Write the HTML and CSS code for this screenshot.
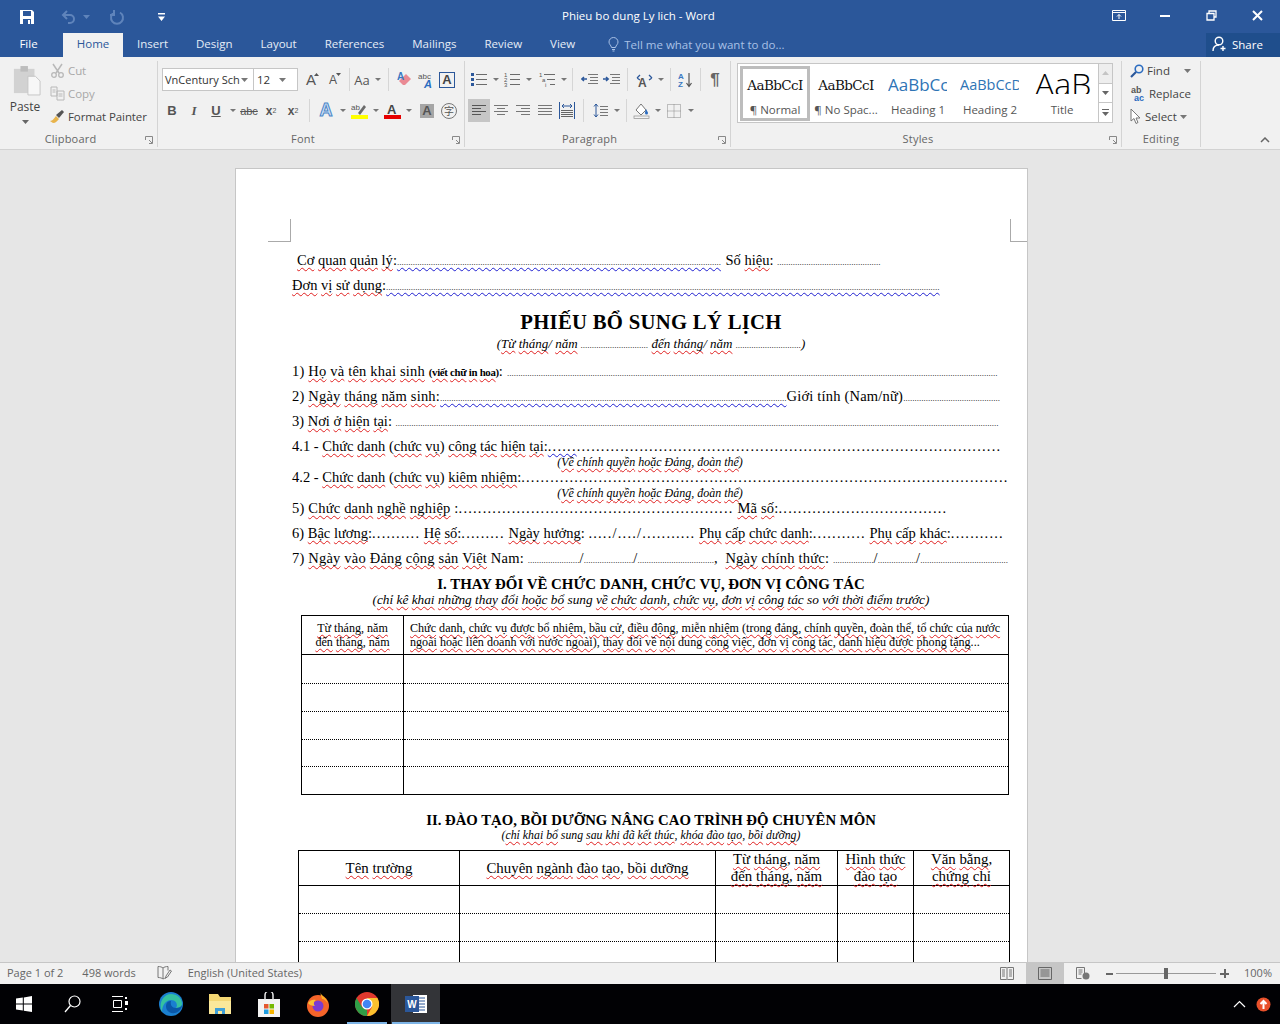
FILE: index.html
```html
<!DOCTYPE html>
<html lang="vi">
<head>
<meta charset="utf-8">
<title>Phieu bo dung Ly lich - Word</title>
<link rel="stylesheet" href="styles.css">
</head>
<body>
<div class="app">
  <header class="titlebar">
    <div class="qat">
      <svg class="q-save" width="16" height="16" viewBox="0 0 16 16"><path d="M1 1h12l2 2v12H1z" fill="#fff"/><rect x="4" y="2" width="8" height="5" fill="#2b579a"/><rect x="4" y="10" width="8" height="5" fill="#2b579a"/><rect x="9" y="11" width="2" height="4" fill="#fff"/></svg>
      <svg class="q-undo" width="16" height="16" viewBox="0 0 16 16"><path d="M6 2 2 6l4 4M2 6h7a4 4 0 0 1 0 8H7" fill="none" stroke="#5f84bb" stroke-width="2"/></svg>
      <svg class="q-arrow" width="7" height="4" viewBox="0 0 7 4"><path d="M0 0h7L3.500 4z" fill="#5f84bb"/></svg>
      <svg class="q-redo" width="16" height="16" viewBox="0 0 16 16"><path d="M11 3.500a6 6 0 1 1-6 0M5 1v5H1" fill="none" stroke="#5f84bb" stroke-width="2"/></svg>
      <svg class="q-cust" width="7" height="8" viewBox="0 0 7 8"><path d="M0 0h7v1.500H0zM0 3.500h7L3.500 8z" fill="#fff"/></svg>
    </div>
    <div class="doc-title">Phieu bo dung Ly lich - Word</div>
    <div class="winctl">
      <div class="wc"><svg width="14" height="11" viewBox="0 0 14 11"><path d="M.5.500h13v10H.500zM.5 2.500h13M7 9V4.500M5 6.500l2-2 2 2" fill="none" stroke="#fff"/></svg></div>
      <div class="wc"><svg width="10" height="2" viewBox="0 0 10 2"><rect width="10" height="2" fill="#fff"/></svg></div>
      <div class="wc"><svg width="11" height="11" viewBox="0 0 11 11"><path d="M3 3V1h7v6H8M1 3.500h7v6.500H1z" fill="none" stroke="#fff" stroke-width="1.300"/></svg></div>
      <div class="wc"><svg width="11" height="11" viewBox="0 0 11 11"><path d="m1 1 9 9M10 1l-9 9" stroke="#fff" stroke-width="2"/></svg></div>
    </div>
  </header>
  <nav class="tabs">
    <span class="tab tab-file">File</span>
    <span class="tab tab-active">Home</span>
    <span class="tab">Insert</span>
    <span class="tab">Design</span>
    <span class="tab">Layout</span>
    <span class="tab">References</span>
    <span class="tab">Mailings</span>
    <span class="tab">Review</span>
    <span class="tab">View</span>
    <span class="tell">
      <svg width="11" height="15" viewBox="0 0 11 15"><path d="M3.500 10.500C3 8 1 7.500 1 5a4.500 4.500 0 0 1 9 0c0 2.500-2 3-2.500 5.500zM4 12.500h3M4.500 14h2" fill="none" stroke="#a9c1e6"/></svg>
      Tell me what you want to do...
    </span>
    <span class="share">
      <svg width="16" height="16" viewBox="0 0 16 16"><circle cx="7" cy="5" r="3.800" fill="none" stroke="#fff" stroke-width="1.400"/><path d="M1 15c0-4 2.500-6 6-6M11 10v5M8.500 12.500h5" fill="none" stroke="#fff" stroke-width="1.400"/></svg>
      Share
    </span>
  </nav>

  <section class="ribbon">
    <div class="group g-clip">
      <div class="body clip-body">
        <div class="paste">
          <svg width="28" height="31" viewBox="0 0 30 33"><rect x="1" y="4" width="22" height="26" fill="#d2d2d2"/><rect x="8" y="1" width="8" height="6" fill="#bdbdbd"/><path d="M16 12h8l5 5v15H16z" fill="#f7f7f7" stroke="#c4c4c4"/></svg>
          <span class="paste-label">Paste</span>
          <svg class="mini" width="7" height="4" viewBox="0 0 7 4"><path d="M0 0h7L3.500 4z" fill="#666"/></svg>
        </div>
        <div class="clip-col">
          <div class="clip-item dim"><svg width="15" height="15" viewBox="0 0 15 15"><path d="M3 1l6 9M12 1 6 10" stroke="#b8b8b8" stroke-width="1.500" fill="none"/><circle cx="4" cy="12" r="2.300" fill="none" stroke="#b8b8b8" stroke-width="1.300"/><circle cx="11" cy="12" r="2.300" fill="none" stroke="#b8b8b8" stroke-width="1.300"/></svg>Cut</div>
          <div class="clip-item dim"><svg width="15" height="15" viewBox="0 0 15 15"><path d="M1 1h6v9H1zM7 5h7v9H7zM2.500 4h3M2.500 6h3M8.500 8h4M8.500 10h4" fill="none" stroke="#b8b8b8"/></svg>Copy</div>
          <div class="clip-item"><svg width="15" height="15" viewBox="0 0 15 15"><path d="M0 12c3 0 4-3 6-5l3 3c-2 2-3 4-6 4z" fill="#e8b44c"/><path d="m6 6 3 3 5-6-2-2z" fill="#555"/></svg>Format Painter</div>
        </div>
      </div>
      <div class="glabel">Clipboard<svg class="launch" width="8" height="8" viewBox="0 0 8 8"><path d="M.5 4V.500H7.500V7.500H4M4 4l3 3" fill="none" stroke="#888"/></svg></div>
    </div>

    <div class="group g-font">
      <div class="body">
        <div class="row">
          <div class="combo">
            <span class="fontname">VnCentury Sch</span><svg class="mini" width="7" height="4" viewBox="0 0 7 4"><path d="M0 0h7L3.500 4z" fill="#777"/></svg>
            <span class="fontsize">12</span><svg class="mini" width="7" height="4" viewBox="0 0 7 4"><path d="M0 0h7L3.500 4z" fill="#777"/></svg>
          </div>
          <div class="tb t-grow"><span class="gl-a gl-a-big">A</span><svg class="sup" width="5" height="3" viewBox="0 0 5 3"><path d="M0 3h5L2.500 0z" fill="#555"/></svg></div>
          <div class="tb"><span class="gl-a gl-a-small">A</span><svg class="sup" width="5" height="3" viewBox="0 0 5 3"><path d="M0 0h5L2.500 3z" fill="#555"/></svg></div>
          <i class="sep"></i>
          <div class="tb tb-s"><span class="gl-aa">Aa</span></div>
          <div class="ar"></div>
          <i class="sep"></i>
          <div class="tb"><svg width="16" height="15" viewBox="0 0 16 15"><path d="m6 13-4-4 7-7 5 5-6 6z" fill="#ea8a94"/><text x="0" y="8" class="ic-text ic-blue">A</text></svg></div>
          <div class="tb tb-m"><svg width="16" height="16" viewBox="0 0 16 16"><text x="0" y="7" class="ic-tiny">abc</text><text x="6" y="16" class="ic-boldblue">A</text></svg></div>
          <div class="tb tb-m"><span class="gl-box">A</span></div>
        </div>
        <div class="row">
          <div class="tb gl-b">B</div>
          <div class="tb gl-i">I</div>
          <div class="tb gl-u">U</div>
          <div class="ar"></div>
          <div class="tb gl-st">abc</div>
          <div class="tb gl-x">x<sub>2</sub></div>
          <div class="tb gl-x">x<sup>2</sup></div>
          <i class="sep"></i>
          <div class="tb"><span class="gl-outline">A</span></div>
          <div class="ar"></div>
          <div class="tb"><svg width="17" height="17" viewBox="0 0 17 17"><text x="0" y="8" class="ic-tiny">ab</text><path d="m7 11 6-8 2 2-6 8z" fill="#6b6b6b"/><rect y="13" width="17" height="4" fill="#ffff00"/></svg></div>
          <div class="ar"></div>
          <div class="tb"><svg width="17" height="17" viewBox="0 0 17 17"><text x="3" y="12" class="ic-fc">A</text><rect y="13" width="17" height="4" fill="#e60000"/></svg></div>
          <div class="ar"></div>
          <div class="tb tb-p"><span class="gl-shade">A</span></div>
          <div class="tb"><span class="gl-enc">字</span></div>
        </div>
      </div>
      <div class="glabel">Font<svg class="launch" width="8" height="8" viewBox="0 0 8 8"><path d="M.5 4V.500H7.500V7.500H4M4 4l3 3" fill="none" stroke="#888"/></svg></div>
    </div>

    <div class="group g-para">
      <div class="body">
        <div class="row">
          <div class="tb"><svg width="16" height="15" viewBox="0 0 16 15"><path d="M5 2.500h11M5 7.500h11M5 12.500h11" stroke="#6b6b6b"/><path d="M0 1h3v3H0zM0 6h3v3H0zM0 11h3v3H0z" fill="#2b579a"/></svg></div>
          <div class="ar"></div>
          <div class="tb"><svg width="16" height="15" viewBox="0 0 16 15"><path d="M6 2.500h10M6 7.500h10M6 12.500h10" stroke="#6b6b6b"/><text x="0" y="5" class="ic-n">1</text><text x="0" y="10" class="ic-n">2</text><text x="0" y="15" class="ic-n">3</text></svg></div>
          <div class="ar"></div>
          <div class="tb tb-p"><svg width="16" height="15" viewBox="0 0 16 15"><path d="M5 2.500h11M8 7.500h8M11 12.500h5" stroke="#6b6b6b"/><text x="0" y="5" class="ic-n">1</text><text x="3" y="10" class="ic-n">a</text><text x="6" y="15" class="ic-n">i</text></svg></div>
          <div class="ar ar-n"></div>
          <i class="sep"></i>
          <div class="tb"><svg width="17" height="13" viewBox="0 0 17 13"><path d="M7 1.500h10M9 4.500h8M9 7.500h8M7 10.500h10" stroke="#777"/><path d="M6 3.500H1m2-2-2.200 2 2.200 2" stroke="#2b579a" stroke-width="1.500" fill="none" transform="translate(0 2.500)"/></svg></div>
          <div class="tb"><svg width="17" height="13" viewBox="0 0 17 13"><path d="M7 1.500h10M9 4.500h8M9 7.500h8M7 10.500h10" stroke="#777"/><path d="M0 6h5m-2-2 2.200 2L3 8" stroke="#2b579a" stroke-width="1.500" fill="none"/></svg></div>
          <i class="sep"></i>
          <div class="tb"><svg width="17" height="14" viewBox="0 0 17 14"><text x="2" y="14" class="ic-dir">A</text><path d="M1 5l3-3M1 5l3 2M16 5l-3-3M16 5l-3 2" stroke="#2b579a" stroke-width="1.300" fill="none"/></svg></div>
          <div class="ar"></div>
          <i class="sep sep-n"></i>
          <div class="tb"><svg width="15" height="16" viewBox="0 0 15 16"><text x="0" y="7" class="ic-az">A</text><text x="0" y="15" class="ic-az">Z</text><path d="M11 1v13M8.500 11l2.500 3.500 2.500-3.500" stroke="#555" stroke-width="1.200" fill="none"/></svg></div>
          <i class="sep sep-n"></i>
          <div class="tb gl-pil">¶</div>
        </div>
        <div class="row">
          <div class="tb tb-on"><svg width="14" height="11" viewBox="0 0 14 11"><path d="M0 .500h14M0 3.500h9M0 6.500h14M0 9.500h9" stroke="#555"/></svg></div>
          <div class="tb"><svg width="14" height="11" viewBox="0 0 14 11"><path d="M0 .500h14M3 3.500h8M0 6.500h14M3 9.500h8" stroke="#777"/></svg></div>
          <div class="tb"><svg width="14" height="11" viewBox="0 0 14 11"><path d="M0 .500h14M5 3.500h9M0 6.500h14M5 9.500h9" stroke="#777"/></svg></div>
          <div class="tb"><svg width="14" height="11" viewBox="0 0 14 11"><path d="M0 .500h14M0 3.500h14M0 6.500h14M0 9.500h14" stroke="#777"/></svg></div>
          <div class="tb"><svg width="16" height="17" viewBox="0 0 16 17"><path d="M.5 0v17M15.500 0v17" stroke="#2b579a"/><path d="M3 4h10M5 2 3 4l2 2M11 2l2 2-2 2" stroke="#2b579a" fill="none"/><path d="M2 8.500h12M2 10.500h12M2 12.500h12M2 14.500h12" stroke="#666"/></svg></div>
          <i class="sep sep-w"></i>
          <div class="tb"><svg width="15" height="15" viewBox="0 0 15 15"><path d="M3 1v13M1 3.500 3 1l2 2.500M1 11.500 3 14l2-2.500" stroke="#2b579a" fill="none"/><path d="M7 3.500h8M7 6.500h8M7 9.500h8M7 12.500h8" stroke="#777"/></svg></div>
          <div class="ar"></div>
          <i class="sep sep-n"></i>
          <div class="tb"><svg width="17" height="17" viewBox="0 0 17 17"><path d="m3 8 5-6 5 6-5 5z" fill="#fff" stroke="#777"/><path d="M13 7c1 2 2 3 2 4a1.500 1.500 0 0 1-3 0c0-1 .5-2 1-4z" fill="#2b6cc0"/><rect x="1" y="14" width="15" height="2.500" fill="#f3f3f3" stroke="#8f8f8f" stroke-width=".700"/></svg></div>
          <div class="ar"></div>
          <div class="tb"><svg width="14" height="14" viewBox="0 0 14 14"><path d="M.5.500h13v13H.500zM7 .500v13M.5 7h13" fill="none" stroke="#888" stroke-dasharray="1 1"/></svg></div>
          <div class="ar"></div>
        </div>
      </div>
      <div class="glabel">Paragraph<svg class="launch" width="8" height="8" viewBox="0 0 8 8"><path d="M.5 4V.500H7.500V7.500H4M4 4l3 3" fill="none" stroke="#888"/></svg></div>
    </div>

    <div class="group g-styles">
      <div class="body styles-body">
        <div class="gallery">
          <div class="style style-on"><div class="pv pv-n">AaBbCcI</div><div class="slabel">¶ Normal</div></div>
          <div class="style"><div class="pv pv-n">AaBbCcI</div><div class="slabel">¶ No Spac...</div></div>
          <div class="style"><div class="pv pv-h1">AaBbCc</div><div class="slabel">Heading 1</div></div>
          <div class="style"><div class="pv pv-h2">AaBbCcD</div><div class="slabel">Heading 2</div></div>
          <div class="style"><div class="pv pv-t">AaB</div><div class="slabel">Title</div></div>
          <div class="gscroll">
            <div class="gs gs-up"><svg width="7" height="4" viewBox="0 0 7 4"><path d="M0 4h7L3.500 0z" fill="#c4c4c4"/></svg></div>
            <div class="gs"><svg width="7" height="4" viewBox="0 0 7 4"><path d="M0 0h7L3.500 4z" fill="#666"/></svg></div>
            <div class="gs"><svg width="7" height="7" viewBox="0 0 7 7"><path d="M0 0h7v1H0zM0 3h7L3.500 7z" fill="#666"/></svg></div>
          </div>
        </div>
      </div>
      <div class="glabel">Styles<svg class="launch" width="8" height="8" viewBox="0 0 8 8"><path d="M.5 4V.500H7.500V7.500H4M4 4l3 3" fill="none" stroke="#888"/></svg></div>
    </div>

    <div class="group g-edit">
      <div class="body edit-body">
        <div class="edit-item"><svg width="14" height="14" viewBox="0 0 14 14"><circle cx="9" cy="5" r="3.800" fill="none" stroke="#2b6cc0" stroke-width="1.600"/><path d="m6 8-5 5" stroke="#2b579a" stroke-width="2.200"/></svg>Find<svg class="ed-ar" width="7" height="4" viewBox="0 0 7 4"><path d="M0 0h7L3.500 4z" fill="#777"/></svg></div>
        <div class="edit-item"><svg width="16" height="16" viewBox="0 0 16 16"><text x="1" y="7" class="ic-rep">ab</text><text x="4" y="15" class="ic-rep ic-repb">ac</text></svg>Replace</div>
        <div class="edit-item"><svg width="12" height="17" viewBox="0 0 12 17"><path d="M1 1v12l3-2.500 2 5 2-1-2-4.500h4z" fill="#fff" stroke="#777"/></svg>Select<svg class="ed-ar2" width="7" height="4" viewBox="0 0 7 4"><path d="M0 0h7L3.500 4z" fill="#777"/></svg></div>
      </div>
      <div class="glabel glabel-e">Editing</div>
    </div>
    <div class="collapse"><svg width="10" height="6" viewBox="0 0 10 6"><path d="m1 5 4-4 4 4" fill="none" stroke="#666" stroke-width="1.500"/></svg></div>
  </section>

  <main class="docarea">
    <article class="page">
      <i class="crop crop-tl"></i>
      <i class="crop crop-tr"></i>

      <p class="ln ln-first"><u>Cơ</u> <u>quan</u> <u>quản</u> <u>lý</u>:<span class="dots bl">................................................................................................................................................</span> <span class="gap1"></span>Số <u>hiệu</u>: <span class="dots">..............................................</span></p>
      <p class="ln"><u>Đơn</u> <u>vị</u> <u>sử</u> <u>dụng</u>:<span class="dots bl">......................................................................................................................................................................................................................................................</span></p>
      <h1 class="title">PHIẾU BỔ SUNG LÝ LỊCH</h1>
      <p class="period">(<u>Từ</u> <u>tháng</u>/ <u>năm</u> <span class="dots">..............................</span> <u>đến</u> <u>tháng</u>/ <u>năm</u> <span class="dots">.............................</span>)</p>
      <p class="ln wide">1) <u>Họ</u> <u>và</u> <u>tên</u> <u>khai</u> <u>sinh</u> <span class="upper">(<u>viết</u> <u>chữ</u> <u>in</u> <u>hoa</u>)</span>: <span class="dots">..........................................................................................................................................................................................................................</span></p>
      <p class="ln wide">2) <u>Ngày</u> <u>tháng</u> <u>năm</u> <u>sinh</u>:<span class="dots bl">..........................................................................................................................................................</span>Giới tính (Nam/nữ)<span class="dots">...........................................</span></p>
      <p class="ln">3) <u>Nơi</u> <u>ở</u> <u>hiện</u> <u>tại</u>: <span class="dots">............................................................................................................................................................................................................................................................................</span></p>
      <p class="ln ln-s">4.1 - <u>Chức</u> <u>danh</u> (<u>chức</u> <u>vụ</u>) <u>công</u> <u>tác</u> <u>hiện</u> <u>tại</u>:<span class="spaced bl">......</span><span class="spaced">........................................................................................</span></p>
      <p class="note">(<u>Về</u> <u>chính</u> <u>quyền</u> <u>hoặc</u> <u>Đảng</u>, <u>đoàn</u> <u>thể</u>)</p>
      <p class="ln ln-s">4.2 - <u>Chức</u> <u>danh</u> (<u>chức</u> <u>vụ</u>) <u>kiêm</u> <u>nhiệm</u>:<span class="spaced">.....................................................................................................</span></p>
      <p class="note">(<u>Về</u> <u>chính</u> <u>quyền</u> <u>hoặc</u> <u>Đảng</u>, <u>đoàn</u> <u>thể</u>)</p>
      <p class="ln wide">5) <u>Chức</u> <u>danh</u> <u>nghề</u> <u>nghiệp</u> :<span class="spaced">.........................................................</span> <u>Mã</u> <u>số</u>:<span class="spaced">...................................</span></p>
      <p class="ln">6) <u>Bậc</u> <u>lương</u>:<span class="spaced">..........</span> <u>Hệ</u> <u>số</u>:<span class="spaced">.........</span> <u>Ngày</u> <u>hưởng</u>: <span class="spaced">...../..../...........</span> <u>Phụ</u> <u>cấp</u> <u>chức</u> <u>danh</u>:<span class="spaced">...........</span> <u>Phụ</u> <u>cấp</u> <u>khác</u>:<span class="spaced">...........</span></p>
      <p class="ln wide">7) <u>Ngày</u> <u>vào</u> <u>Đảng</u> <u>cộng</u> <u>sản</u> <u>Việt</u> Nam: <span class="dots">.......................</span>/<span class="dots">......................</span>/<span class="dots">..................................</span>,&nbsp; <u>Ngày</u> <u>chính</u> <u>thức</u>: <span class="dots">..................</span>/<span class="dots">.................</span>/<span class="dots">.......................................</span></p>

      <h2 class="sec">I. THAY ĐỔI VỀ CHỨC DANH, CHỨC VỤ, ĐƠN VỊ CÔNG TÁC</h2>
      <p class="secnote secnote-1">(<u>chỉ</u> <u>kê</u> <u>khai</u> <u>những</u> <u>thay</u> <u>đổi</u> <u>hoặc</u> <u>bổ</u> sung <u>về</u> <u>chức</u> <u>danh</u>, <u>chức</u> <u>vụ</u>, <u>đơn</u> <u>vị</u> <u>công</u> <u>tác</u> so <u>với</u> <u>thời</u> <u>điểm</u> <u>trước</u>)</p>

      <table class="tbl tbl-1">
        <tr class="r-h1">
          <td class="c-a"><u>Từ</u> <u>tháng</u>, <u>năm</u><br><u>đến</u> <u>tháng</u>, <u>năm</u></td>
          <td class="c-b"><u>Chức</u> <u>danh</u>, <u>chức</u> <u>vụ</u> <u>được</u> <u>bổ</u> <u>nhiệm</u>, <u>bầu</u> <u>cử</u>, <u>điều</u> <u>động</u>, <u>miễn</u> <u>nhiệm</u> (<u>trong</u> <u>đảng</u>, <u>chính</u> <u>quyền</u>, <u>đoàn</u> <u>thể</u>, <u>tổ</u> <u>chức</u> <u>của</u> <u>nước</u><br><u>ngoài</u> <u>hoặc</u> <u>liên</u> <u>doanh</u> <u>với</u> <u>nước</u> <u>ngoài</u>), <u>thay</u> <u>đổi</u> <u>về</u> <u>nội</u> dung <u>công</u> <u>việc</u>, <u>đơn</u> <u>vị</u> <u>công</u> <u>tác</u>, <u>danh</u> <u>hiệu</u> <u>được</u> <u>phong</u> <u>tặng</u>...</td>
        </tr>
        <tr class="r-29 dot"><td></td><td></td></tr>
        <tr class="r-28 dot"><td></td><td></td></tr>
        <tr class="r-28 dot"><td></td><td></td></tr>
        <tr class="r-27 dot"><td></td><td></td></tr>
        <tr class="r-28"><td></td><td></td></tr>
      </table>

      <h2 class="sec sec-2">II. ĐÀO TẠO, BỒI DƯỠNG NÂNG CAO TRÌNH ĐỘ CHUYÊN MÔN</h2>
      <p class="secnote secnote-2">(<u>chỉ</u> <u>khai</u> <u>bổ</u> sung <u>sau</u> <u>khi</u> <u>đã</u> <u>kết</u> <u>thúc</u>, <u>khóa</u> <u>đào</u> <u>tạo</u>, <u>bồi</u> <u>dưỡng</u>)</p>

      <table class="tbl tbl-2">
        <tr class="r-h2">
          <td class="c-1"><u>Tên</u> <u>trường</u></td>
          <td class="c-2"><u>Chuyên</u> <u>ngành</u> <u>đào</u> <u>tạo</u>, <u>bồi</u> <u>dưỡng</u></td>
          <td class="c-3"><u>Từ</u> <u>tháng</u>, <u>năm</u><br><u>đến</u> <u>tháng</u>, <u>năm</u></td>
          <td class="c-4"><u>Hình</u> <u>thức</u><br><u>đào</u> <u>tạo</u></td>
          <td class="c-5"><u>Văn</u> <u>bằng</u>,<br><u>chứng</u> <u>chỉ</u></td>
        </tr>
        <tr class="r-28 dot"><td></td><td></td><td></td><td></td><td></td></tr>
        <tr class="r-28 dot"><td></td><td></td><td></td><td></td><td></td></tr>
        <tr class="r-28 dot"><td></td><td></td><td></td><td></td><td></td></tr>
      </table>
    </article>
  </main>

  <footer class="status">
    <span class="st st-page">Page 1 of 2</span>
    <span class="st st-words">498 words</span>
    <svg class="st-proof" width="15" height="15" viewBox="0 0 15 15"><path d="M1 1.500c2 0 4 .500 5 1.500v11c-1-1-3-1.500-5-1.500zM6 3c1-1 3-1.500 5-1.500v4M6 14c1-.500 2-1 3-1M9 11l4-6 1.500 1-4 6-2 1z" fill="none" stroke="#777"/></svg>
    <span class="st st-lang">English (United States)</span>
    <span class="st-right">
      <span class="view"><svg width="14" height="13" viewBox="0 0 14 13"><path d="M.5.500h6L7 1l.5-.500h6v12h-6L7 12l-.5.500h-6zM7 1v11M2 3h3M2 5h3M2 7h3M2 9h3M9 3h3M9 5h3M9 7h3M9 9h3" fill="none" stroke="#777"/></svg></span>
      <span class="view view-on"><svg width="14" height="13" viewBox="0 0 14 13"><path d="M.5.500h13v12H.500zM2.500 3h9M2.500 5h9M2.500 7h9M2.500 9h9" fill="none" stroke="#666"/></svg></span>
      <span class="view"><svg width="14" height="13" viewBox="0 0 14 13"><path d="M.5.500h8v8M.5.500v11h5M2.500 3h4M2.500 5h4M2.500 7h3" fill="none" stroke="#777"/><circle cx="10" cy="9" r="3.500" fill="#777"/></svg></span>
      <span class="zoom-minus"></span>
      <span class="zoom-track"><i class="zoom-thumb"></i></span>
      <span class="zoom-plus"></span>
      <span class="st st-zoom">100%</span>
    </span>
  </footer>

  <div class="taskbar">
    <div class="task"><svg width="16" height="16" viewBox="0 0 16 16"><path d="M0 2.500 6.800 1.500v6H0zM7.800 1.400 16 0v7.500H7.800zM0 8.500h6.800v6L0 13.500zM7.800 8.500H16V16l-8.200-1.300z" fill="#fff"/></svg></div>
    <div class="task"><svg width="17" height="18" viewBox="0 0 17 18"><circle cx="10.500" cy="6.500" r="5.500" fill="none" stroke="#fff" stroke-width="1.200"/><path d="M6.500 10.500 1 17" stroke="#fff" stroke-width="1.300"/></svg></div>
    <div class="task task-view"><svg width="16" height="16" viewBox="0 0 16 16"><path d="M0 .500h11M0 15.500h11M1.500 4.500h8v7h-8z" fill="none" stroke="#fff"/><path d="M13 1h2v2h-2zM13 5h3v4h-3zM13 12h2v2h-2z" fill="#fff"/></svg></div>
    <div class="task"><svg width="24" height="24" viewBox="0 0 24 24"><circle cx="12" cy="12" r="12" fill="#1a7fd0"/><path d="M3 20C-1 12 4 2 12 2c6 0 11 4 11 10 0 3-3 4-6 4 2-2 1-8-5-8-5 0-9 5-9 12z" fill="#35c1a0"/><path d="M12 9c-5 0-6 5-4 9 2 3 7 5 12 1 2-2 3-4 3-6-1 2-3 3-6 3-4 0-6-3-5-7z" fill="#0a57a8"/></svg></div>
    <div class="task"><svg width="22" height="22" viewBox="0 0 22 22"><path d="M0 1h9l2 3h11v17H0z" fill="#f4d774"/><path d="M0 8h22v13H0z" fill="#fbe89a"/><path d="M6 15h10v6H6z" fill="#3f9fd8"/><path d="M9 18h4v3H9z" fill="#fbe89a"/></svg></div>
    <div class="task"><svg width="22" height="25" viewBox="0 0 22 25"><path d="M0 7h22v18H0z" fill="#f3f3f3"/><path d="M7 8V3a4 4 0 0 1 8 0v5" fill="none" stroke="#e8e8e8" stroke-width="1.500"/><path d="M6 12h4.500v4.500H6z" fill="#e4572e"/><path d="M11.500 12H16v4.500h-4.500z" fill="#76b900"/><path d="M6 17.500h4.500V22H6z" fill="#1e9bdf"/><path d="M11.500 17.500H16V22h-4.500z" fill="#f7b500"/></svg></div>
    <div class="task"><svg width="24" height="25" viewBox="0 0 24 25"><circle cx="12" cy="14" r="11" fill="#f5642a"/><path d="M14 0c1 4 7 5 8 12-1-3-4-5-6-5z" fill="#fbb021"/><circle cx="12" cy="14" r="5.500" fill="#7a3bd1"/><path d="M2 11c2-3 5-4 8-3-2 1-3 4-1 6-3 0-6-1-7-3z" fill="#f9c034"/></svg></div>
    <div class="task"><svg width="24" height="24" viewBox="0 0 24 24"><circle cx="12" cy="12" r="12" fill="#e0392e"/><path d="M12 24a12 12 0 0 1-10.400-18L7 15l5 3z" fill="#2f9e47"/><path d="M12 24a12 12 0 0 0 10.400-18H12l5 9z" fill="#fbc02d"/><circle cx="12" cy="12" r="5.500" fill="#fff"/><circle cx="12" cy="12" r="4.300" fill="#4285f4"/></svg></div>
    <div class="task task-on"><svg width="22" height="20" viewBox="0 0 22 20"><rect x="8" y="1" width="14" height="18" fill="#fff"/><path d="M14 4h6M14 7h6M14 10h6M14 13h6M14 16h6" stroke="#2b579a"/><rect y="2" width="14" height="16" fill="#2b579a"/><text x="7" y="14" class="ic-w">W</text></svg></div>
    <i class="task-mark task-mark-a"></i>
    <i class="task-mark task-mark-b"></i>
    <div class="tray">
      <svg width="13" height="8" viewBox="0 0 13 8"><path d="m1 7 5.500-5.500L12 7" fill="none" stroke="#fff" stroke-width="1.200"/></svg>
      <svg width="15" height="15" viewBox="0 0 15 15"><circle cx="7.500" cy="7.500" r="7" fill="#e8502a"/><path d="M7.500 12V4M4.500 7l3-3 3 3" fill="none" stroke="#fff" stroke-width="2"/></svg>
    </div>
  </div>
</div>
</body>
</html>
```

FILE: styles.css
```css
* { box-sizing: border-box; }
html, body { margin: 0; padding: 0; }
body { font-family: "Open Sans", "Noto Sans", sans-serif; font-size: 12px; color: #444; overflow: hidden; }
.app { width: 1280px; height: 1024px; display: flex; flex-direction: column; overflow: hidden; }

.titlebar { height: 33px; background: #2b579a; display: flex; color: #fff; flex: none; }
.qat { width: 562px; display: flex; align-items: center; padding-left: 19px; }
.q-undo { margin-left: 26px; }
.q-arrow { margin-left: 6px; }
.q-redo { margin-left: 19px; }
.q-cust { margin-left: 33px; }
.doc-title { flex: 1; line-height: 32px; font-size: 11.500px; }
.winctl { display: flex; }
.wc { width: 46px; height: 31px; display: flex; align-items: center; justify-content: center; }

.tabs { height: 24px; background: #2b579a; display: flex; align-items: stretch; color: #e6edf7; flex: none; font-size: 11.500px; }
.tab { padding: 0 14px; line-height: 22px; }
.tab-file { width: 63px; text-align: center; padding: 0 6px 0 0; color: #fff; }
.tab-active { width: 60px; padding: 0; text-align: center; background: #f1f1f1; color: #2b579a; }
.tell { display: flex; align-items: center; gap: 5px; margin-left: 7px; padding-left: 12px; color: #a9c1e6; flex: 1; padding-bottom: 2px; }
.share { width: 74px; background: #1f4e8c; color: #fff; display: flex; align-items: center; gap: 4px; padding: 0 0 2px 6px; }

.ribbon { height: 93px; background: #f1f1f1; display: flex; border-bottom: 1px solid #d2d2d2; flex: none; }
.group { display: flex; flex-direction: column; margin: 4px 0 2px; border-right: 1px solid #d4d4d4; }
.g-clip { width: 158px; }
.g-font { width: 307px; }
.g-para { width: 266px; }
.g-styles { width: 391px; }
.g-edit { width: 79px; }
.body { height: 72px; padding-top: 7px; display: flex; flex-direction: column; gap: 8px; }
.glabel { position: relative; text-align: center; font-size: 11px; line-height: 16px; padding: 1px 16px 0 0; color: #666; letter-spacing: .2px; }
.glabel-e { padding-right: 0; }
.launch { position: absolute; right: 4px; top: 6px; }

.clip-body { flex-direction: row; gap: 0; padding-top: 0; }
.paste { width: 50px; display: flex; flex-direction: column; align-items: center; padding: 4px 0 0 4px; }
.paste-label { line-height: 16px; margin: 3px 0 0 -4px; }
.mini { flex: none; }
.paste .mini { margin: 5px 0 0 -4px; }
.clip-col { display: flex; flex-direction: column; margin-top: -2px; }
.clip-item { height: 23px; display: flex; align-items: center; gap: 3px; font-size: 11.500px; white-space: nowrap; letter-spacing: -.1px; }
.dim { color: #a8a8a8; }

.row { display: flex; align-items: center; height: 23px; padding-left: 3px; }
.tb { width: 22px; height: 23px; flex: none; display: flex; align-items: center; justify-content: center; position: relative; color: #555; }
.tb-s { width: 20px; margin-left: -3px; }
.tb-m { margin-left: -1px; }
.tb-p { margin-left: 2px; }
.ar { width: 11px; height: 23px; flex: none; position: relative; }
.ar-n { width: 9px; }
.ar::after { content: ""; position: absolute; left: 3px; top: 10px; border: 3px solid transparent; border-top: 3.500px solid #777; border-bottom: 0; }
.sep { width: 11px; height: 23px; flex: none; position: relative; }
.sep-n { width: 8px; }
.sep::after { content: ""; position: absolute; left: 5px; top: 0; bottom: 0; width: 1px; background: #d6d6d6; }
.sep-n::after { left: 4px; }
.combo { width: 136px; height: 23px; margin: 0 2px 0 1px; flex: none; display: flex; align-items: center; background: #fff; border: 1px solid #c6c6c6; font-size: 11.500px; color: #333; }
.fontname { width: 78px; padding-left: 2px; white-space: nowrap; overflow: hidden; font-size: 11px; }
.fontsize { width: 26px; margin-left: 5px; padding-left: 3px; border-left: 1px solid #c6c6c6; line-height: 21px; }
.gl-a { font-family: "Liberation Sans", sans-serif; color: #555; }
.gl-a-big { font-size: 15px; }
.gl-a-small { font-size: 12px; }
.sup { position: absolute; right: 3px; top: 5px; }
.gl-aa { font-size: 13px; color: #555; }
.gl-box { width: 16px; height: 16px; border: 1px solid #2b579a; font: bold 13px/14px "Liberation Sans", sans-serif; color: #444; text-align: center; }
.gl-b { font: bold 13px "Liberation Sans", sans-serif; }
.gl-i { font: italic bold 13px "Liberation Serif", serif; }
.gl-u { font: bold 13px "Liberation Sans", sans-serif; text-decoration: underline; }
.gl-st { font: 11px "Liberation Sans", sans-serif; text-decoration: line-through; }
.gl-x { font: bold 12px "Liberation Sans", sans-serif; }
.gl-x sub, .gl-x sup { font-size: 7px; font-weight: normal; }
.gl-outline { font: bold 18px "Liberation Sans", sans-serif; color: #cfe0f5; -webkit-text-stroke: 1px #4a86c8; }
.gl-shade { width: 14px; height: 14px; background: #a6a6a6; font: bold 13px/14px "Liberation Sans", sans-serif; color: #555; text-align: center; }
.gl-enc { width: 16px; height: 16px; border: 1px solid #777; border-radius: 50%; font: 10px/14px "Noto Sans CJK SC", sans-serif; color: #555; text-align: center; }
.gl-pil { font: bold 17px "Liberation Sans", sans-serif; color: #666; }
.tb-on { background: #c6c6c6; }
.ic-text { font: bold 10px "Liberation Sans", sans-serif; }
.ic-blue { fill: #3a78c2; }
.ic-tiny { font: 8px "Liberation Sans", sans-serif; fill: #555; }
.ic-boldblue { font: italic bold 11px "Liberation Sans", sans-serif; fill: #2b6cc0; }
.ic-fc { font: bold 13px "Liberation Sans", sans-serif; fill: #444; }
.ic-n { font: 6px "Liberation Sans", sans-serif; fill: #555; }
.ic-dir { font: bold 12px "Liberation Sans", sans-serif; fill: #555; }
.ic-az { font: bold 8px "Liberation Sans", sans-serif; fill: #3a78c2; }
.ic-rep { font: bold 9px "Liberation Sans", sans-serif; fill: #555; }
.ic-repb { fill: #2b6cc0; }
.ic-w { font: bold 10px "Liberation Sans", sans-serif; fill: #fff; text-anchor: middle; }

.styles-body { padding: 2px 0 0 6px; }
.gallery { width: 376px; height: 60px; background: #fff; border: 1px solid #c6c6c6; display: flex; padding: 2px 0 0 2px; position: relative; }
.style { width: 72px; height: 55px; flex: none; padding: 4px 3px 0; overflow: hidden; text-align: center; }
.style-on { width: 70px; border: 3px solid #bdbdbd; padding: 1px 0 0; }
.pv { height: 30px; line-height: 30px; overflow: hidden; white-space: nowrap; color: #111; }
.pv-n { font: 13.500px/30px "DejaVu Serif", serif; letter-spacing: -.6px; }
.pv-h1 { font: 400 17px/30px "Open Sans", sans-serif; color: #2e74b5; text-align: left; margin-left: 3px; width: 59px; }
.pv-h2 { font: 400 14.500px/30px "Open Sans", sans-serif; color: #2e74b5; text-align: left; margin-left: 3px; width: 59px; }
.pv-t { font: 300 32px/22px "Open Sans", sans-serif; color: #000; height: 24px; margin-bottom: 6px; padding-top: 3px; width: 56px; margin-left: 6px; text-align: left; }
.slabel { font-size: 11.500px; line-height: 20px; white-space: nowrap; color: #555; }
.gscroll { position: absolute; right: 0; top: 0; bottom: 0; width: 14px; display: flex; flex-direction: column; border-left: 1px solid #c6c6c6; }
.gs { flex: 1; display: flex; align-items: center; justify-content: center; background: #fff; border-bottom: 1px solid #c6c6c6; }
.gs-up { background: #eee; }
.gs:last-child { border-bottom: 0; }

.edit-body { gap: 0; padding: 0 0 0 8px; margin-top: -2px; }
.edit-item { height: 23px; display: flex; align-items: center; gap: 3px; font-size: 11.500px; white-space: nowrap; }
.ed-ar { margin-left: 11px; }
.ed-ar2 { margin-left: 0; }
.collapse { flex: 1; display: flex; align-items: flex-end; justify-content: flex-end; padding: 0 10px 6px 0; }

.docarea { height: 812px; flex: none; background: #e6e6e6; overflow: hidden; padding: 18px 0 0 235px; display: flex; }
.page { width: 793px; height: 1100px; flex: none; background: #fff; border: 1px solid #c6c6c6; padding: 79px 0 0 56px; position: relative; font-family: "Liberation Serif", "Noto Sans CJK SC", serif; font-size: 14.500px; color: #000; }
.crop { position: absolute; width: 23px; height: 23px; top: 50px; border: 0 solid #aaa; }
.crop-tl { left: 32px; border-width: 0 1px 1px 0; }
.crop-tr { right: 0; width: 17px; border-width: 0 0 1px 1px; }
.page p, .page h1, .page h2 { margin: 0; white-space: nowrap; font-weight: normal; }
.page u { text-decoration: underline wavy #e02020 1px; text-underline-offset: 2px; text-decoration-skip-ink: none; }
.ln { height: 25px; line-height: 25px; width: 730px; }
.ln-first { padding-left: 5px; }
.ln-s { height: 20px; }
.wide { letter-spacing: .2px; }
.gap1 { margin-left: 1px; }
.dots { font-size: 9px; letter-spacing: 0; }
.bl { text-decoration: underline wavy #2020d0 1px; text-underline-offset: 2px; text-decoration-skip-ink: none; }
.spaced { letter-spacing: 1.200px; }
.upper { font-size: 10.800px; font-weight: bold; letter-spacing: -.3px; }
.page .title { height: 37px; padding-top: 9px; line-height: 30px; font-size: 20.700px; font-weight: bold; text-align: center; width: 718px; letter-spacing: .3px; }
.period { height: 24px; line-height: 18px; text-align: center; width: 718px; font-style: italic; font-size: 13px; }
.note { height: 11px; line-height: 16px; width: 716px; text-align: center; font-style: italic; font-size: 12px; }
.page .sec { height: 20px; line-height: 26px; width: 718px; text-align: center; font-weight: bold; font-size: 14.900px; }
.page .sec-2 { margin-top: 12px; font-size: 14.750px; }
.secnote { font-style: italic; width: 718px; text-align: center; line-height: 18px; font-size: 13.300px; }
.secnote-1 { height: 24px; }
.secnote-2 { height: 23px; line-height: 16px; font-size: 11.800px; }

.tbl { border-collapse: collapse; table-layout: fixed; }
.tbl td { border: 1px solid #000; padding: 0; text-align: center; vertical-align: middle; }
.tbl .dot td { border-bottom-style: dotted; }
.tbl .dot + tr td { border-top-style: dotted; }
.tbl-1 { width: 708px; margin-left: 9px; font-size: 12.100px; line-height: 14px; }
.c-a { width: 102px; }
.tbl-1 .c-b { text-align: left; padding-left: 6px; white-space: nowrap; }
.r-h1 { height: 39px; }
.r-h2 { height: 34px; }
.r-29 { height: 29px; }
.r-28 { height: 28px; }
.r-27 { height: 27px; }
.tbl-2 { width: 711px; margin-left: 6px; font-size: 14.900px; line-height: 17px; }
.c-1 { width: 161px; }
.c-2 { width: 256px; }
.c-3 { width: 122px; }
.c-4 { width: 76px; }
.c-5 { width: 96px; }

.status { height: 22px; background: #f1f1f1; border-top: 1px solid #c6c6c6; display: flex; align-items: center; flex: none; color: #666; font-size: 11px; position: relative; padding-bottom: 2px; }
.st-page { margin-left: 7px; }
.st-words { margin-left: 19px; }
.st-proof { margin-left: 21px; }
.st-lang { margin-left: 16px; }
.st-right { margin-left: auto; display: flex; align-items: center; height: 21px; margin-top: 2px; }
.view { width: 38px; height: 21px; display: flex; align-items: center; justify-content: center; }
.view-on { background: #c6c6c6; }
.zoom-minus { width: 7px; height: 2px; background: #666; margin-left: 4px; }
.zoom-track { width: 100px; height: 1px; background: #999; margin: 0 4px 0 3px; position: relative; }
.zoom-thumb { position: absolute; left: 48px; top: -5px; width: 4px; height: 11px; background: #666; }
.zoom-plus { width: 9px; height: 9px; background: linear-gradient(#666, #666) center / 9px 2px no-repeat, linear-gradient(#666, #666) center / 2px 9px no-repeat; }
.st-zoom { margin: -2px 8px 0 15px; }

.taskbar { height: 40px; flex: 1; background: #010104; display: flex; align-items: center; position: relative; }
.task { width: 49px; height: 40px; flex: none; display: flex; align-items: center; justify-content: center; }
.task:first-child { width: 48px; }
.task-view { padding-right: 4px; }
.task-on { background: #333438; }
.task-mark { position: absolute; bottom: 0; height: 2px; background: #7db4e6; }
.task-mark-a { left: 347px; width: 40px; }
.task-mark-b { left: 392px; width: 48px; }
.tray { margin-left: auto; display: flex; align-items: center; gap: 10px; padding-right: 9px; }
```
